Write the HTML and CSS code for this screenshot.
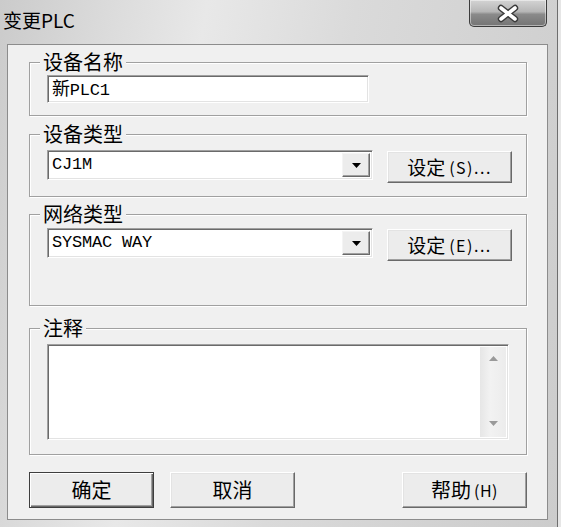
FILE: index.html
```html
<!DOCTYPE html>
<html lang="zh-CN">
<head>
<meta charset="utf-8">
<title>变更PLC</title>
<link rel="stylesheet" href="styles.css">
</head>
<body>
<div class="window">
  <div class="titlebar">
    <span class="title">变更PLC</span>
    <div class="close">
      <svg width="24" height="19" viewBox="0 0 24 19">
        <path d="M5 4 L19 15 M19 4 L5 15" stroke="#3a3a3a" stroke-width="6.4" stroke-linecap="round"/>
        <path d="M5 4 L19 15 M19 4 L5 15" stroke="#ffffff" stroke-width="3.6" stroke-linecap="round"/>
      </svg>
    </div>
  </div>
  <div class="client">
    <div class="group g1">
      <div class="legend">设备名称</div>
      <div class="body">
        <div class="sunken input"><span class="val"><span class="cjk">新</span>PLC1</span></div>
      </div>
    </div>

    <div class="group g2">
      <div class="legend">设备类型</div>
      <div class="body row">
        <div class="sunken combo">
          <span class="val">CJ1M</span>
          <span class="drop"><svg width="9" height="5" viewBox="0 0 9 5"><path d="M0 0 H9 L4.5 5 Z" fill="#000"/></svg></span>
        </div>
        <div class="btn set">设定<span class="lat">(S)...</span></div>
      </div>
    </div>

    <div class="group g3">
      <div class="legend">网络类型</div>
      <div class="body row">
        <div class="sunken combo">
          <span class="val">SYSMAC WAY</span>
          <span class="drop"><svg width="9" height="5" viewBox="0 0 9 5"><path d="M0 0 H9 L4.5 5 Z" fill="#000"/></svg></span>
        </div>
        <div class="btn set">设定<span class="lat">(E)...</span></div>
      </div>
    </div>

    <div class="group g4">
      <div class="legend">注释</div>
      <div class="body">
        <div class="sunken memo">
          <div class="memo-text"></div>
          <div class="scroll">
            <svg width="9" height="5" viewBox="0 0 9 5"><path d="M0 5 H9 L4.5 0 Z" fill="#9a9a9a"/></svg>
            <svg width="9" height="5" viewBox="0 0 9 5"><path d="M0 0 H9 L4.5 5 Z" fill="#9a9a9a"/></svg>
          </div>
        </div>
      </div>
    </div>

    <div class="actions">
      <div class="btn wide default">确定</div>
      <div class="btn wide">取消</div>
      <div class="spacer"></div>
      <div class="btn wide">帮助<span class="lat">(H)</span></div>
    </div>
  </div>
</div>
</body>
</html>
```
FILE: styles.css
```css
* { box-sizing: border-box; }
html, body { margin: 0; padding: 0; }
body {
  width: 561px;
  height: 527px;
  overflow: hidden;
  background: #e6e6e6;
  font-family: "Noto Sans CJK SC", "Noto Sans", sans-serif;
  color: #000;
}
.window {
  width: 558px;
  height: 527px;
  display: flex;
  flex-direction: column;
  background: linear-gradient(100deg, #cbcbcb 0%, #dcdcdc 18%, #e8e8e8 32%, #dadada 55%, #d2d2d2 80%, #cccccc 100%);
  border-right: 1px solid #6e6e6e;
}
.titlebar {
  height: 44px;
  flex: none;
  display: flex;
  justify-content: space-between;
  align-items: flex-start;
  padding: 0 10px 0 3px;
}
.title {
  font-size: 19px;
  line-height: 22px;
  margin-top: 9px;
}
.close {
  width: 78px;
  height: 27px;
  border: 1px solid #3c3c3c;
  border-top: none;
  border-radius: 0 0 5px 5px;
  background: linear-gradient(#d4d4d4 0%, #b6b6b6 45%, #8a8a8a 55%, #747474 100%);
  box-shadow: inset 0 0 0 1px rgba(255,255,255,0.45);
  display: flex;
  align-items: center;
  justify-content: center;
}
.client {
  margin-left: 7px;
  width: 541px;
  height: 476px;
  flex: none;
  background: #f0f0f0;
  border: 1px solid #8c8c8c;
  padding: 0 20px 0 21px;
  display: flex;
  flex-direction: column;
}
.group {
  border: 1px solid #a0a0a0;
  box-shadow: inset 1px 1px 0 #fff, 1px 1px 0 #fff;
}
.g1 { margin-top: 17px; }
.g2 { margin-top: 18px; }
.g3 { margin-top: 17px; }
.g4 { margin-top: 22px; }
.legend {
  width: fit-content;
  margin: -11px 0 0 10px;
  padding: 0 3px;
  height: 20px;
  line-height: 20px;
  font-size: 20px;
  background: #f0f0f0;
}
.body { padding-left: 17px; }
.g1 .body { padding-top: 3px; padding-bottom: 12px; }
.g2 .body { padding-top: 6px; padding-bottom: 13px; }
.g3 .body { padding-top: 4px; padding-bottom: 44px; }
.g4 .body { padding-top: 6px; padding-bottom: 14px; }
.row { display: flex; align-items: flex-start; }
.sunken {
  background: #fff;
  border: 1px solid;
  border-color: #a0a0a0 #ffffff #ffffff #a0a0a0;
  box-shadow: inset 1px 1px 0 #6a6a6a, inset -1px -1px 0 #e3e3e3;
}
.input {
  width: 322px;
  height: 28px;
  display: flex;
  align-items: center;
  padding-left: 4px;
}
.val {
  font-family: "Liberation Mono", monospace;
  font-size: 17px;
  line-height: 20px;
  letter-spacing: -0.2px;
}
.cjk {
  font-family: "Noto Sans CJK SC", sans-serif;
  font-size: 18px;
}
.combo {
  width: 326px;
  height: 30px;
  display: flex;
  align-items: stretch;
  padding: 2px 2px 2px 4px;
}
.combo .val { flex: 1; align-self: center; }
.drop {
  width: 28px;
  background: #ececec;
  border: 1px solid;
  border-color: #f4f4f4 #696969 #696969 #f4f4f4;
  box-shadow: inset -1px -1px 0 #a0a0a0;
  display: flex;
  align-items: center;
  justify-content: center;
}
.btn {
  background: #ececec;
  border: 1px solid;
  border-color: #ffffff #696969 #696969 #ffffff;
  box-shadow: inset -1px -1px 0 #a0a0a0, inset 1px 1px 0 #e3e3e3;
  display: flex;
  align-items: center;
  justify-content: center;
  font-size: 19px;
  line-height: 22px;
}
.lat {
  font-size: 16px;
  letter-spacing: 1.5px;
  margin-left: 4px;
}
.set {
  width: 125px;
  height: 32px;
  margin-left: 14px;
  margin-top: 1px;
}
.memo {
  width: 462px;
  height: 96px;
  display: flex;
  padding: 2px;
}
.memo-text { flex: 1; }
.scroll {
  width: 26px;
  background: linear-gradient(to right, #e6e6e6, #f2f2f2 40%, #ececec);
  display: flex;
  flex-direction: column;
  align-items: center;
  justify-content: space-between;
  padding: 9px 0 11px;
}
.actions {
  margin-top: 17px;
  display: flex;
}
.wide {
  width: 125px;
  height: 36px;
  font-size: 20px;
}
.wide .lat { letter-spacing: 0.5px; margin-left: 3px; }
.wide + .wide { margin-left: 16px; }
.spacer { flex: 1; }
.default {
  border: 1px solid #3e3e3e;
  box-shadow: inset 1px 1px 0 #fff, inset -1px -1px 0 #696969, inset -2px -2px 0 #a0a0a0;
}
```
